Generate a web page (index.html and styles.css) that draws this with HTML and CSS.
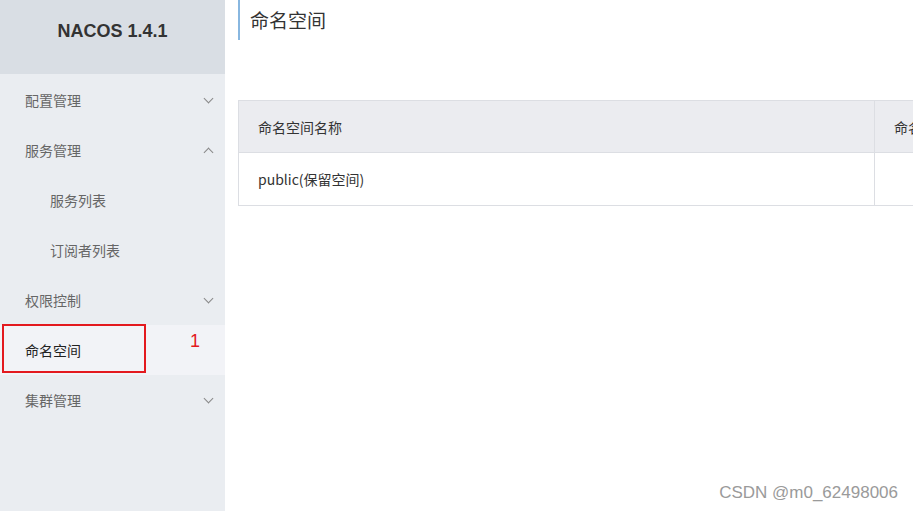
FILE: index.html
```html
<!DOCTYPE html>
<html>
<head>
    <title>Nacos</title>
    <link rel="stylesheet" href="styles.css">
</head>
<body>
    <section class="layout">
        <aside class="sidebar">
            <div class="brand">NACOS 1.4.1</div>
            <ul class="menu">
                <li class="item">配置管理<span class="arrow down"></span></li>
                <li class="item">服务管理<span class="arrow up"></span></li>
                <li class="item sub">服务列表</li>
                <li class="item sub">订阅者列表</li>
                <li class="item">权限控制<span class="arrow down"></span></li>
                <li class="item active">命名空间<span class="mark"></span><span class="mark-num">1</span></li>
                <li class="item">集群管理<span class="arrow down"></span></li>
            </ul>
        </aside>
        <main class="content">
            <h1 class="page-title">命名空间</h1>
            <div class="table-wrap">
                <table class="grid">
                    <thead>
                        <tr><th class="col-name">命名空间名称</th><th class="col-id">命名</th></tr>
                    </thead>
                    <tbody>
                        <tr><td>public(保留空间)</td><td></td></tr>
                    </tbody>
                </table>
            </div>
        </main>
    </section>
    <div class="watermark">CSDN @m0_62498006</div>
</body>
</html>
```
FILE: styles.css
```css
html, body {
    margin: 0;
    padding: 0;
    height: 100%;
    overflow: hidden;
    font-family: "Noto Sans CJK SC", "Liberation Sans", sans-serif;
    background: #fff;
}
.layout {
    display: flex;
    height: 511px;
}
.sidebar {
    width: 225px;
    flex: none;
    background: #eaedf1;
}
.brand {
    height: 74px;
    padding-top: 21px;
    box-sizing: border-box;
    background: #d9dee4;
    text-align: center;
    font: bold 18px "Liberation Sans", sans-serif;
    color: #333;
}
.menu {
    list-style: none;
    margin: 0;
    padding: 1px 0 0;
}
.item {
    position: relative;
    height: 50px;
    line-height: 50px;
    padding-left: 25px;
    font-size: 14px;
    color: #666;
}
.item.sub {
    padding-left: 50px;
}
.item.active {
    background: #f2f3f7;
    color: #222;
}
.arrow {
    position: absolute;
    right: 13px;
    top: 20px;
    width: 6px;
    height: 6px;
    border-right: 1px solid #888;
    border-bottom: 1px solid #888;
    transform: rotate(45deg);
}
.arrow.up {
    top: 24px;
    transform: rotate(-135deg);
}
.mark {
    position: absolute;
    left: 2px;
    top: -1px;
    width: 140px;
    height: 45px;
    border: 2px solid #e3191e;
}
.mark-num {
    position: absolute;
    left: 190px;
    top: 6px;
    color: #e3191e;
    font: 18px "Liberation Sans", sans-serif;
}
.content {
    flex: 1;
    min-width: 0;
    padding-left: 13px;
    overflow: hidden;
}
.page-title {
    margin: 0;
    height: 40px;
    line-height: 40px;
    padding-left: 10px;
    border-left: 2px solid #88b7e0;
    font-size: 19px;
    font-weight: normal;
    color: #333;
}
.table-wrap {
    margin-top: 60px;
}
.grid {
    border-collapse: collapse;
    width: 900px;
    font-size: 14px;
    color: #333;
}
.grid th, .grid td {
    border: 1px solid #dcdee3;
    padding: 0 0 0 19px;
    text-align: left;
    white-space: nowrap;
}
.grid th {
    height: 51px;
    background: #ebecf0;
    font-weight: normal;
}
.grid td {
    height: 52px;
}
.grid .col-name {
    width: 616px;
}
.watermark {
    position: absolute;
    right: 15px;
    bottom: 8px;
    font: 17px "Liberation Sans", sans-serif;
    color: #9a9a9a;
}
```
